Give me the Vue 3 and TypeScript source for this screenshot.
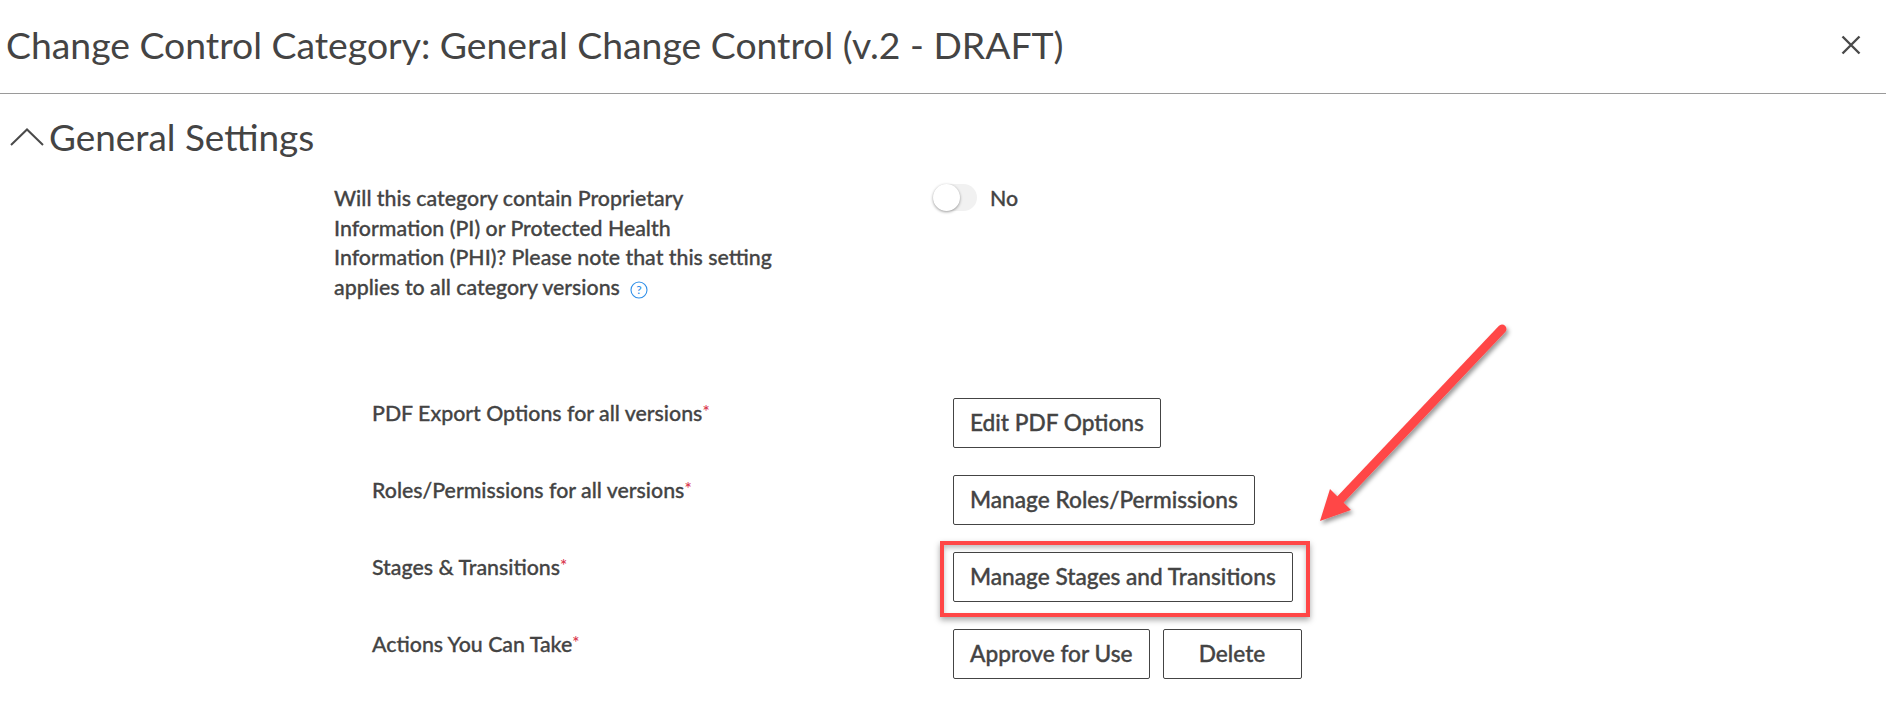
<template>
  <div class="page">
    <header class="modal-header">
      <h1 class="modal-title">Change Control Category: General Change Control (v.2 - DRAFT)</h1>
      <button class="close-btn" aria-label="Close">
        <svg width="20" height="20" viewBox="0 0 20 20">
          <path d="M1.5 1.5 18.5 18.5M18.5 1.5 1.5 18.5" fill="none" stroke="#4a4a4a" stroke-width="2.4" />
        </svg>
      </button>
    </header>

    <section class="settings">
      <h2 class="section-title">
        <svg class="chevron" width="34" height="18" viewBox="0 0 34 18">
          <path d="M1 17 17 1.5 33 17" fill="none" stroke="#4a4a4a" stroke-width="2" />
        </svg>
        General Settings
      </h2>

      <div class="question-row">
        <div class="question">
          Will this category contain Proprietary<br />
          Information (PI) or Protected Health<br />
          Information (PHI)? Please note that this setting<br />
          applies to all category versions
          <svg class="help" width="18" height="18" viewBox="0 0 18 18">
            <circle cx="9" cy="9" r="8" fill="none" stroke="#2f8fe8" stroke-width="1.1" />
            <text x="9" y="13" text-anchor="middle" class="help-mark">?</text>
          </svg>
        </div>
        <div class="toggle-wrap">
          <span class="toggle"><span class="knob"></span></span>
          <span class="toggle-label">No</span>
        </div>
      </div>

      <div class="option-list">
        <div v-for="row in rows" :key="row.label" class="option-row">
          <div class="option-label">{{ row.label }}<span class="req">*</span></div>
          <div class="option-actions">
            <button v-for="b in row.buttons" :key="b" class="btn" :class="{ 'btn-wide': b === 'Delete' }">{{ b }}</button>
          </div>
        </div>
      </div>
    </section>

    <!-- annotations drawn on top of the screenshot -->
    <div class="mark-box"></div>
    <svg class="mark-arrow" width="1886" height="705" viewBox="0 0 1886 705">
      <defs>
        <filter id="arrow-shadow" x="-20%" y="-20%" width="140%" height="140%">
          <feDropShadow dx="2" dy="3" stdDeviation="2" flood-color="#000" flood-opacity="0.4" />
        </filter>
      </defs>
      <g filter="url(#arrow-shadow)">
        <path d="M1502 329 1340 500" fill="none" stroke="#ff4646" stroke-width="9" stroke-linecap="round" />
        <path d="M1320 521 1330 489 1351 510Z" fill="#ff4646" />
      </g>
    </svg>
  </div>
</template>

<script setup lang="ts">
interface OptionRow {
  label: string
  buttons: string[]
}

const rows: OptionRow[] = [
  { label: 'PDF Export Options for all versions', buttons: ['Edit PDF Options'] },
  { label: 'Roles/Permissions for all versions', buttons: ['Manage Roles/Permissions'] },
  { label: 'Stages & Transitions', buttons: ['Manage Stages and Transitions'] },
  { label: 'Actions You Can Take', buttons: ['Approve for Use', 'Delete'] },
]
</script>

<style>
html,
body {
  margin: 0;
  background: #fff;
}
</style>

<style scoped>
.page {
  position: relative;
  width: 1886px;
  height: 705px;
  overflow: hidden;
  font-family: Lato, 'Open Sans', sans-serif;
  color: #444;
  background: #fff;
}

.modal-header {
  height: 94px;
  box-sizing: border-box;
  border-bottom: 1px solid #9a9a9a;
  display: flex;
  align-items: center;
  justify-content: space-between;
  padding: 0 25px 4px 6px;
}

.modal-title {
  margin: 0;
  font-size: 37.33px;
  font-weight: 400;
}

.close-btn {
  border: none;
  background: none;
  padding: 0;
  display: flex;
}

.settings {
  padding-top: 18px;
}

.section-title {
  margin: 0;
  height: 50px;
  display: flex;
  align-items: center;
  gap: 5px;
  padding-left: 10px;
  font-size: 36.9px;
  font-weight: 400;
}

.chevron {
  margin-top: -1px;
}

.question-row {
  display: flex;
  padding: 22px 0 0 334px;
}

.question {
  width: 599px;
  font-size: 21.33px;
  font-weight: 500;
  line-height: 29.7px;
  -webkit-text-stroke: 0.3px #444;
}

.help {
  margin-left: 5px;
  vertical-align: -4px;
}

.help-mark {
  font-size: 12px;
  fill: #2f8fe8;
  -webkit-text-stroke: 0;
}

.toggle-wrap {
  display: flex;
  align-items: center;
  gap: 13px;
  height: 27px;
}

.toggle {
  position: relative;
  width: 44px;
  height: 27px;
  border-radius: 14px;
  background: #f1f1f1;
}

.knob {
  position: absolute;
  left: 0;
  top: 0;
  width: 27px;
  height: 27px;
  border-radius: 50%;
  background: #fff;
  box-shadow: 0 1px 3px rgba(0, 0, 0, 0.4);
}

.toggle-label {
  font-size: 21.33px;
  font-weight: 500;
  -webkit-text-stroke: 0.3px #444;
}

.option-list {
  margin-top: 95px;
  display: flex;
  flex-direction: column;
  gap: 27px;
}

.option-row {
  display: flex;
  height: 50px;
  padding-left: 372px;
}

.option-label {
  width: 581px;
  font-size: 21.33px;
  font-weight: 500;
  line-height: 30px;
  -webkit-text-stroke: 0.3px #444;
}

.req {
  color: #d9334a;
  font-size: 17px;
  vertical-align: 3px;
  line-height: 0;
  -webkit-text-stroke: 0;
}

.option-actions {
  display: flex;
  gap: 13px;
}

.btn {
  height: 50px;
  box-sizing: border-box;
  padding: 0 16px;
  border: 1px solid #444;
  border-radius: 2px;
  background: #fff;
  color: #444;
  font-family: inherit;
  font-size: 22.67px;
  font-weight: 500;
  -webkit-text-stroke: 0.35px #444;
}

.btn-wide {
  width: 139px;
}

.mark-box {
  position: absolute;
  left: 940px;
  top: 541px;
  width: 370px;
  height: 76px;
  box-sizing: border-box;
  border: 4px solid #ff4646;
  box-shadow: 0 3px 6px rgba(0, 0, 0, 0.35), inset 0 3px 5px rgba(0, 0, 0, 0.25);
}

.mark-arrow {
  position: absolute;
  left: 0;
  top: 0;
  pointer-events: none;
}
</style>
